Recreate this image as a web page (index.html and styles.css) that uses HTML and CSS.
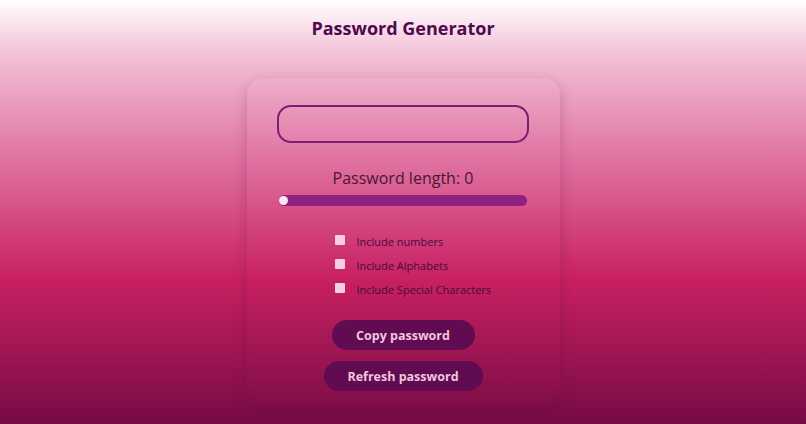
FILE: index.html
```html
<!DOCTYPE html>
<html lang="en">
<head>
<meta charset="utf-8">
<title>Password Generator</title>
<link rel="stylesheet" href="styles.css">
</head>
<body>
<h1 class="title">Password Generator</h1>
<main class="card">
  <input class="password-field" type="text" readonly>
  <p class="length-label">Password length: 0</p>
  <div class="slider"><span class="slider-thumb"></span></div>
  <div class="options">
    <label class="option"><input type="checkbox" class="check"><span>Include numbers</span></label>
    <label class="option"><input type="checkbox" class="check"><span>Include Alphabets</span></label>
    <label class="option"><input type="checkbox" class="check"><span>Include Special Characters</span></label>
  </div>
  <div class="actions">
    <button class="btn btn-copy">Copy password</button>
    <button class="btn btn-refresh">Refresh password</button>
  </div>
</main>
</body>
</html>
```
FILE: styles.css
```css
* { box-sizing: border-box; }
html, body { margin: 0; height: 100%; }
body {
  font-family: "Open Sans", "Noto Sans", sans-serif;
  background: linear-gradient(180deg, #ffffff 0%, #f3c4d8 12%, #e27aa8 35%, #c82062 66%, #760b44 100%);
  display: flex;
  flex-direction: column;
  align-items: center;
  overflow: hidden;
}
.title {
  margin: 16px 0 0;
  font-size: 18px;
  font-weight: 700;
  color: #4f0a4f;
  line-height: 24px;
}
.card {
  margin-top: 38px;
  width: 313px;
  height: 328px;
  border-radius: 16px;
  box-shadow: 0 5px 14px rgba(90, 10, 50, 0.25);
  padding: 27px 30px 0 30px;
  display: flex;
  flex-direction: column;
  align-items: center;
}
.password-field {
  width: 252px;
  height: 38px;
  border: 2px solid #7a2070;
  border-radius: 14px;
  background: transparent;
  outline: none;
}
.length-label {
  margin: 24px 0 0;
  font-size: 16px;
  line-height: 22px;
  color: #4a1436;
}
.slider {
  margin-top: 6px;
  width: 248px;
  height: 11px;
  border-radius: 6px;
  background: #8f2281;
  display: flex;
  align-items: center;
}
.slider-thumb {
  width: 9px;
  height: 9px;
  border-radius: 50%;
  background: #fbe6f1;
}
.options {
  margin-top: 27px;
  display: flex;
  flex-direction: column;
  gap: 7px;
  align-self: flex-start;
  margin-left: 58px;
}
.option {
  display: flex;
  align-items: center;
  gap: 12px;
  font-size: 11px;
  line-height: 17px;
  color: #450c3a;
}
.check {
  appearance: none;
  -webkit-appearance: none;
  margin: 0;
  width: 10px;
  height: 10px;
  background: #f3cfe1;
  border-radius: 1px;
  position: relative;
  top: -2px;
}
.actions {
  margin-top: 22px;
  display: flex;
  flex-direction: column;
  align-items: center;
  gap: 11px;
}
.btn {
  font-family: inherit;
  border: none;
  border-radius: 15px;
  height: 30px;
  background: #600b52;
  color: #f3c6df;
  font-weight: 700;
  font-size: 12.5px;
}
.btn-copy { width: 143px; }
.btn-refresh { width: 159px; }
```
